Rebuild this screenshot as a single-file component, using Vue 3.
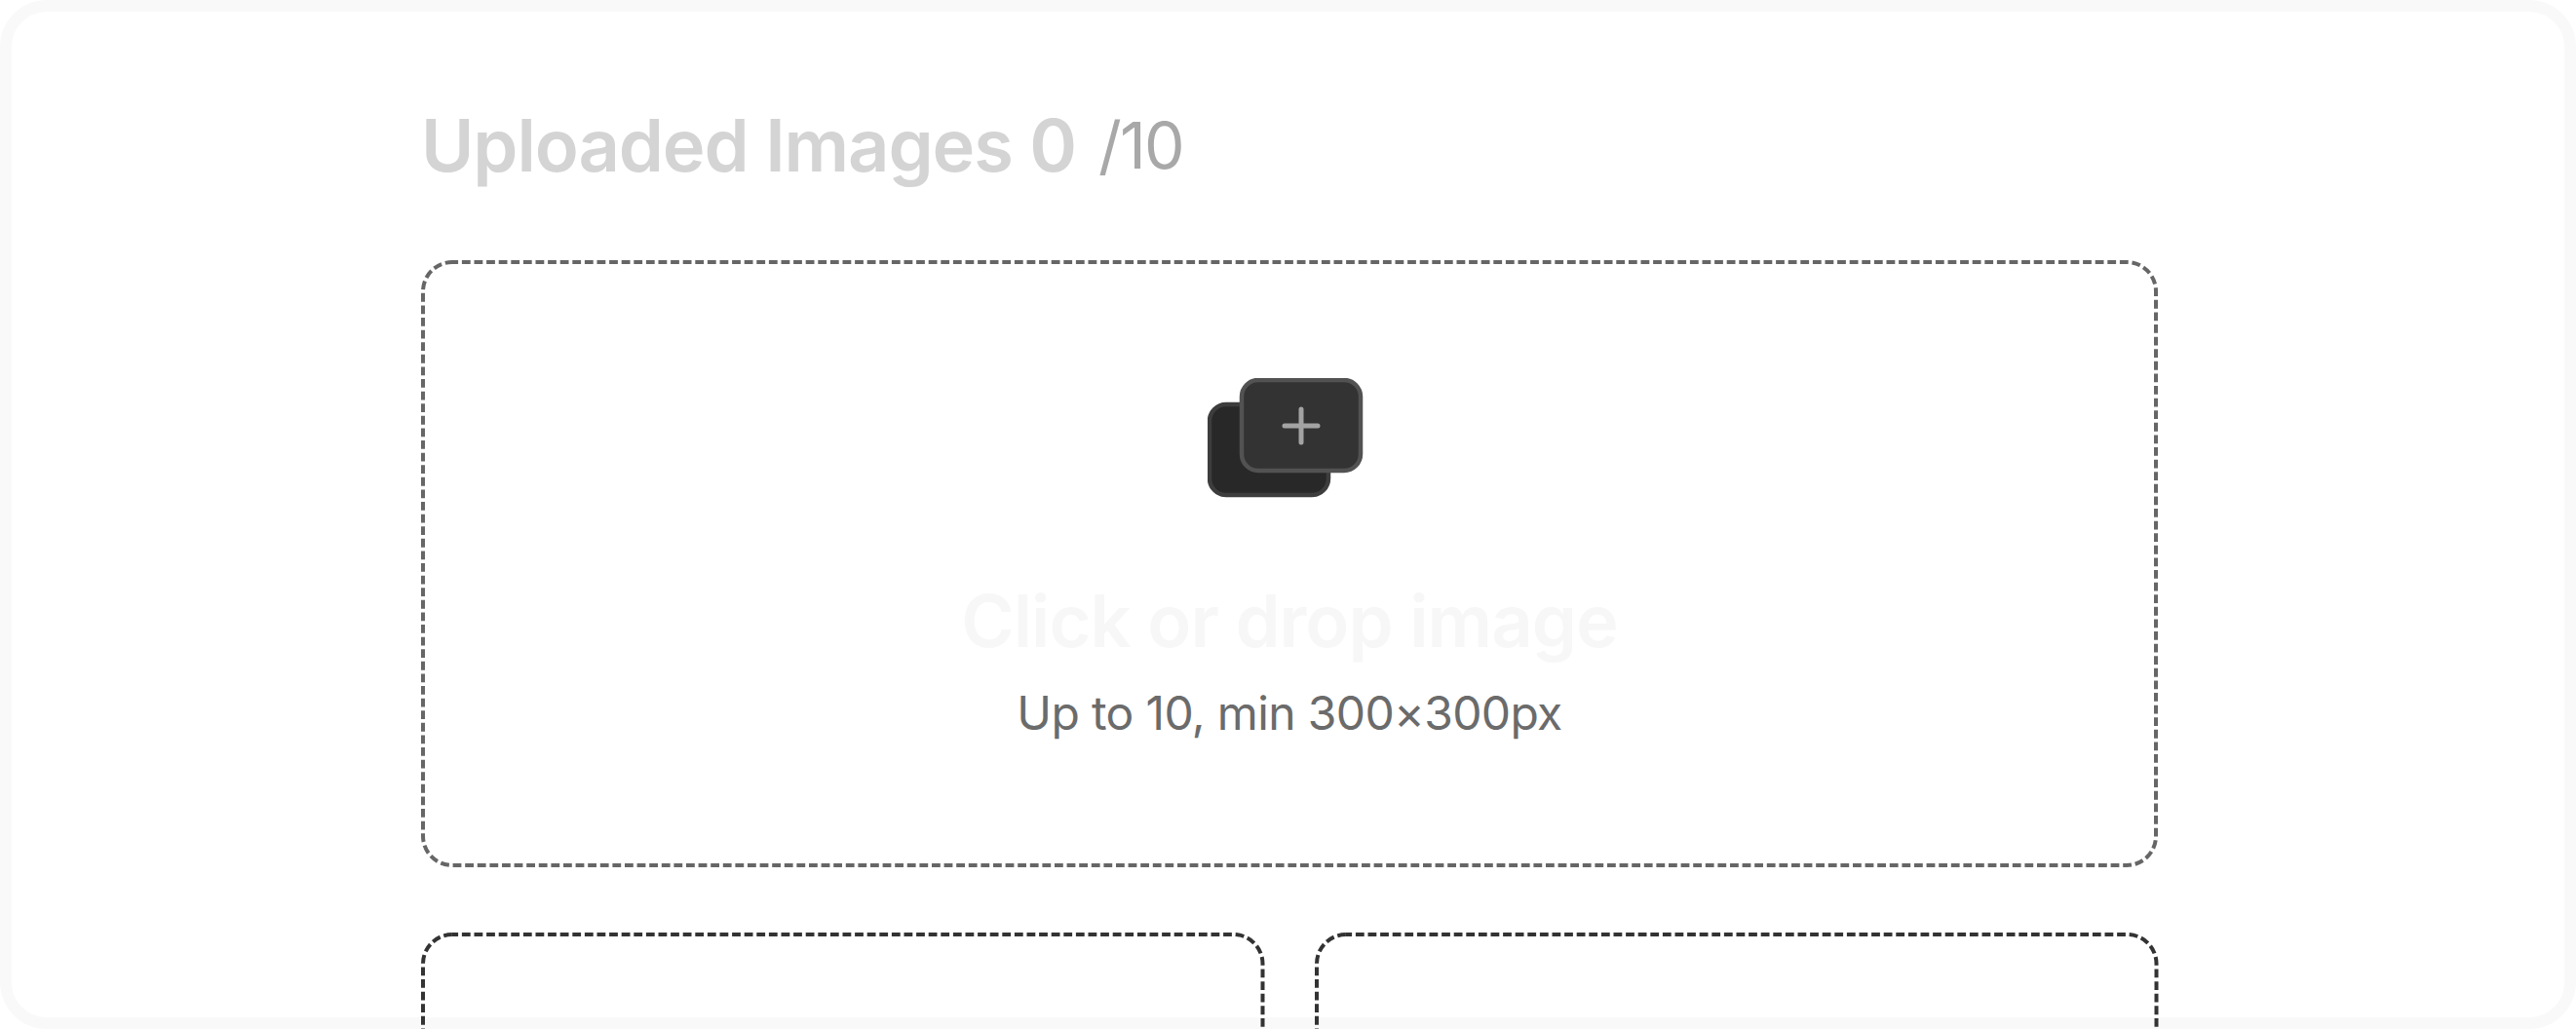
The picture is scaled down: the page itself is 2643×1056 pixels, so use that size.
<script setup>
const slots = [0, 1]
</script>

<template>
  <div class="page">
    <div class="frame">
      <div class="content">
        <div class="heading">
          <h1 class="title">Uploaded Images 0</h1>
          <span class="limit">/10</span>
        </div>
        <div class="zone">
          <svg class="dash" aria-hidden="true"><rect class="dash-rect light" /></svg>
          <svg class="stack" width="162" height="124" viewBox="0 0 162 124" aria-hidden="true">
            <rect x="2" y="27" width="122" height="93" rx="17" fill="#282828" stroke="#3d3d3d" stroke-width="4.500" />
            <rect x="35" y="2" width="122" height="93" rx="17" fill="#333333" stroke="#525252" stroke-width="4.500" />
            <path d="M96 32v34M79 49h34" stroke="#a3a3a3" stroke-width="5" stroke-linecap="round" fill="none" />
          </svg>
          <div class="zone-title">Click or drop image</div>
          <div class="zone-sub">Up to 10, min 300×300px</div>
        </div>
        <div class="slots">
          <div v-for="s in slots" :key="s" class="slot">
            <svg class="dash" aria-hidden="true"><rect class="dash-rect dark" /></svg>
          </div>
        </div>
      </div>
    </div>
  </div>
</template>

<style scoped>
.page {
  height: 1056px;
  overflow: hidden;
  background: #fff;
  font-family: Inter, "Liberation Sans", sans-serif;
}
.frame {
  box-sizing: border-box;
  height: 1056px;
  border: 12px solid #f9f9f9;
  border-radius: 48px;
  background: #fff;
  padding-top: 95px;
}
.content {
  width: 1782px;
  margin-left: 420px;
}
.heading {
  display: flex;
  align-items: center;
  gap: 23px;
  height: 84px;
  margin-bottom: 76px;
}
.title {
  margin: 0;
  font-size: 74px;
  line-height: 84px;
  font-weight: 600;
  letter-spacing: -1.1px;
  color: #d4d4d4;
}
.limit {
  font-size: 66px;
  line-height: 84px;
  font-weight: 400;
  letter-spacing: -1.8px;
  color: #a8a8a8;
}
.zone {
  position: relative;
  box-sizing: border-box;
  height: 623px;
  display: flex;
  flex-direction: column;
  align-items: center;
  padding-top: 121px;
}
.dash {
  position: absolute;
  inset: 0;
  width: 100%;
  height: 100%;
  overflow: visible;
}
.dash-rect {
  x: 2px;
  y: 2px;
  width: calc(100% - 4px);
  height: calc(100% - 4px);
  rx: 30px;
  ry: 30px;
  fill: none;
  stroke-width: 4;
  stroke-dasharray: 8.8 3.8;
  stroke-dashoffset: 2.7;
}
.light { stroke: #666666; }
.dark { stroke: #333333; }
.stack {
  margin-right: 6px;
  flex: none;
}
.zone-title {
  margin-top: 83px;
  font-size: 74px;
  line-height: 84px;
  font-weight: 600;
  letter-spacing: -1px;
  color: #f7f7f7;
}
.zone-sub {
  margin-top: 17px;
  font-size: 48px;
  line-height: 72px;
  font-weight: 400;
  letter-spacing: -0.65px;
  color: #6b6b6b;
}
.slots {
  margin-top: 67px;
  display: grid;
  grid-template-columns: 1fr 1fr;
  gap: 51px;
}
.slot {
  position: relative;
  height: 400px;
}
</style>
